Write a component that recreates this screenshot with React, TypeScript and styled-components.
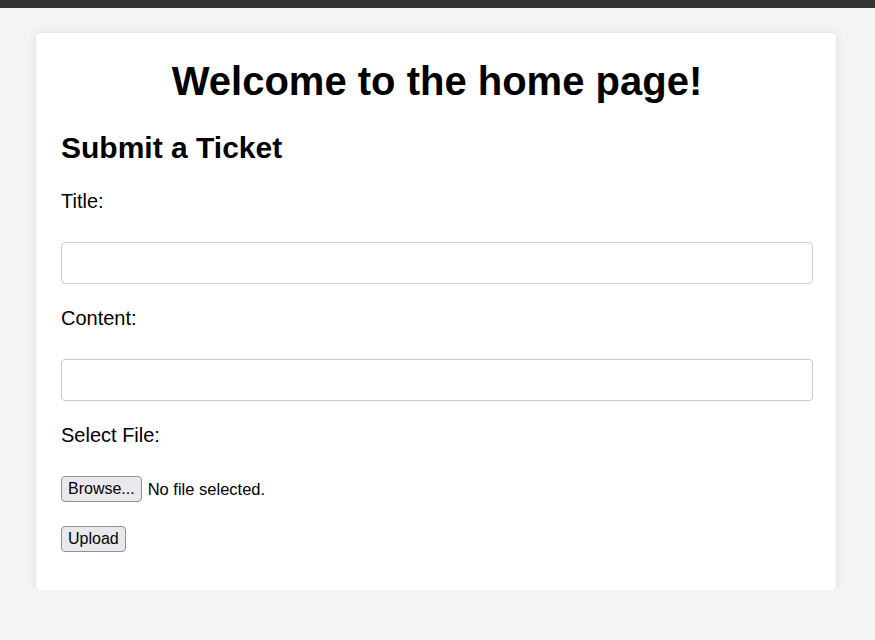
import React from "react";
import styled, { createGlobalStyle } from "styled-components";

const Global = createGlobalStyle`
  html, body { margin: 0; padding: 0; }
  body {
    background: #f4f4f4;
    font-family: "Liberation Sans", Arial, sans-serif;
    color: #000;
  }
`;

const TopBar = styled.header`
  height: 8px;
  background: #333;
`;

const Card = styled.main`
  width: 800px;
  box-sizing: border-box;
  margin: 25px 0 0 36px;
  background: #fff;
  border-radius: 5px;
  box-shadow: 0 0 10px rgba(0, 0, 0, 0.1);
  padding: 25px 23px 38px 25px;
  display: flex;
  flex-direction: column;
`;

const Heading = styled.h1`
  margin: 0;
  text-align: center;
  font-size: 40px;
  line-height: 46px;
  font-weight: 700;
`;

const SubHeading = styled.h2`
  margin: 27px 0 0;
  font-size: 30px;
  line-height: 34px;
  font-weight: 700;
`;

const Form = styled.form`
  display: flex;
  flex-direction: column;
  margin-top: 25px;
`;

const Label = styled.label`
  display: block;
  font-size: 20px;
  line-height: 23px;
  margin-bottom: 29px;
`;

const Input = styled.input`
  display: block;
  box-sizing: border-box;
  width: 100%;
  height: 42px;
  border: 1px solid #ccc;
  border-radius: 4px;
  padding: 10px;
  font-size: 16px;
  margin: 0 0 23px;
  outline: none;
`;

const FileRow = styled.div`
  display: flex;
  align-items: center;
  gap: 6px;
  margin-bottom: 24px;
`;

const NativeButton = styled.button`
  box-sizing: border-box;
  height: 26px;
  padding: 0 6px;
  background: #e9e9ed;
  border: 1px solid #8f8f9d;
  border-radius: 4px;
  font-family: "Liberation Sans", Arial, sans-serif;
  font-size: 16px;
  color: #000;
  line-height: 24px;
  cursor: pointer;
`;

const FileText = styled.span`
  font-size: 16.5px;
`;

const UploadRow = styled.div`
  display: flex;
`;

export default function App() {
  return (
    <>
      <Global />
      <TopBar />
      <Card>
        <Heading>Welcome to the home page!</Heading>
        <SubHeading>Submit a Ticket</SubHeading>
        <Form onSubmit={(e) => e.preventDefault()}>
          <Label htmlFor="title">Title:</Label>
          <Input id="title" type="text" />
          <Label htmlFor="content">Content:</Label>
          <Input id="content" type="text" />
          <Label>Select File:</Label>
          <FileRow>
            <NativeButton type="button">Browse...</NativeButton>
            <FileText>No file selected.</FileText>
          </FileRow>
          <UploadRow>
            <NativeButton type="submit">Upload</NativeButton>
          </UploadRow>
        </Form>
      </Card>
    </>
  );
}
